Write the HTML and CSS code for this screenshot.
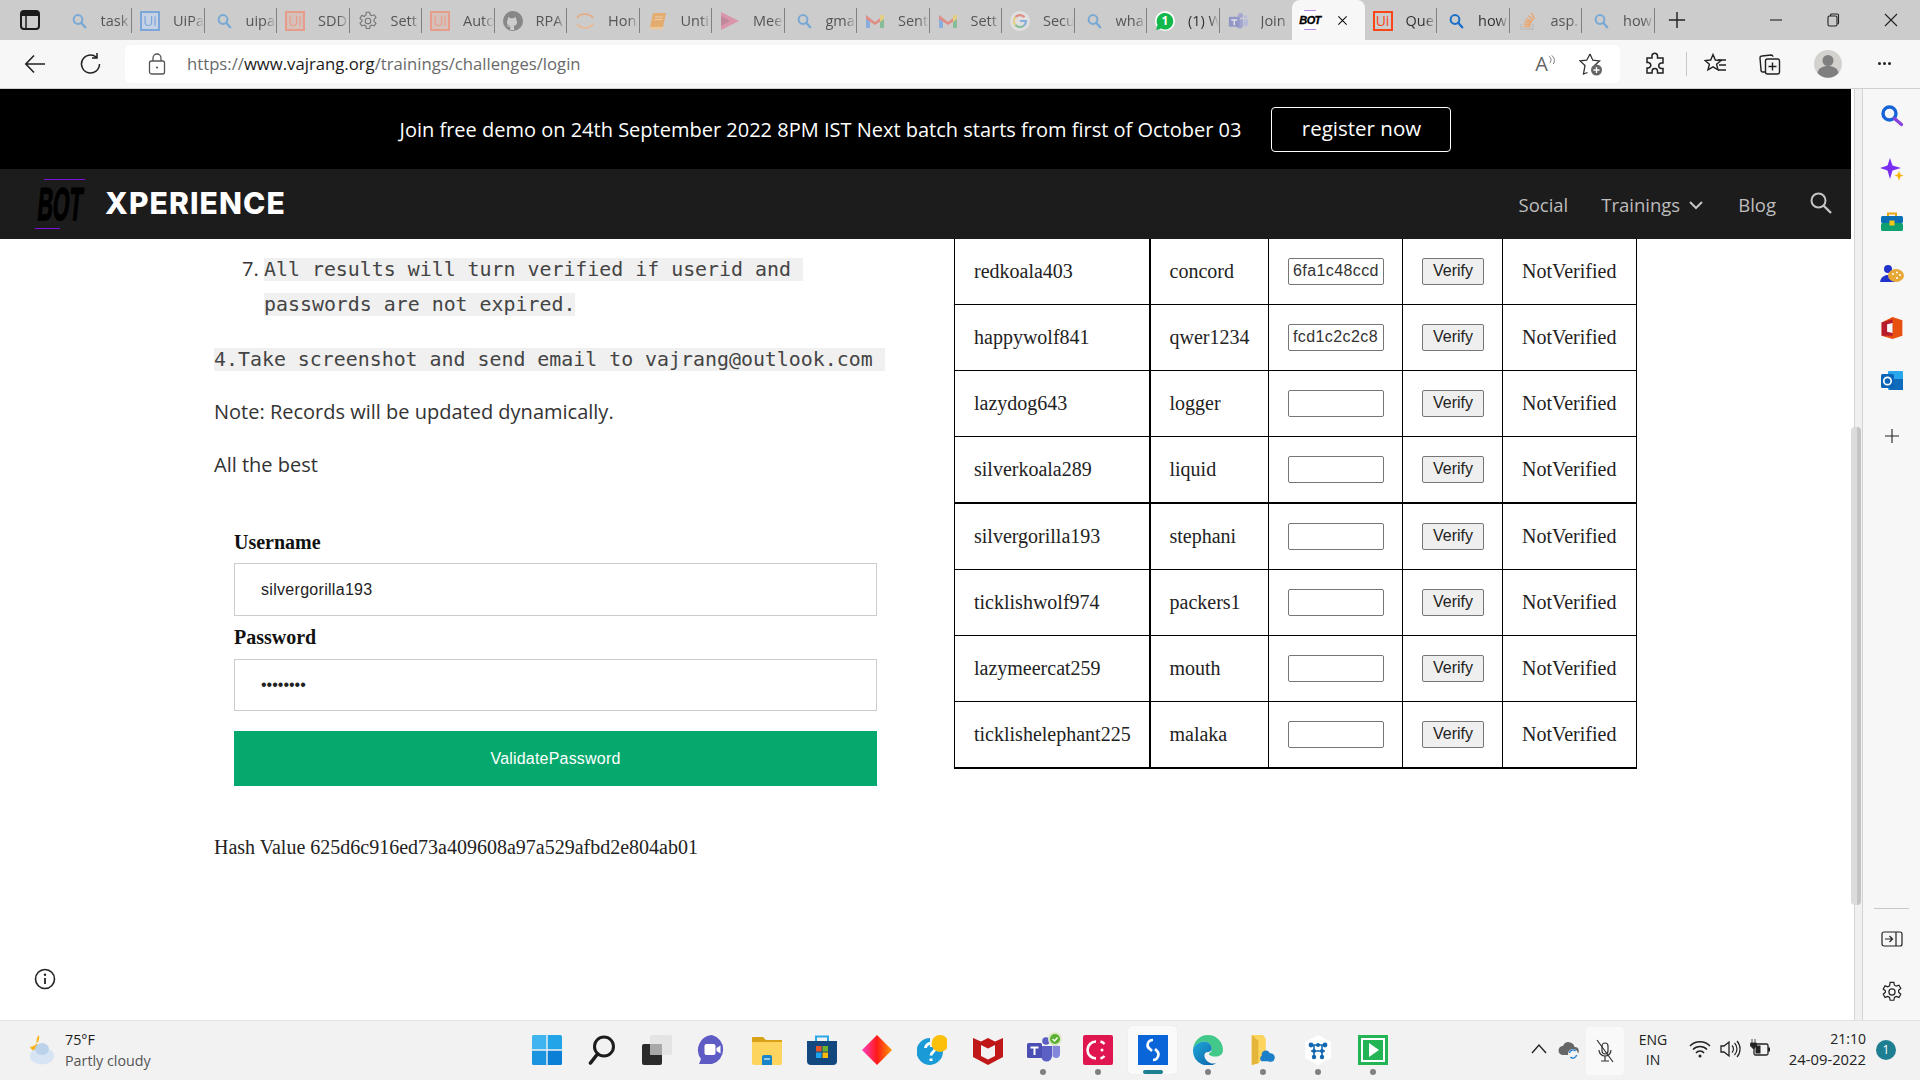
FILE: index.html
```html
<!DOCTYPE html>
<html lang="en">
<head>
<meta charset="utf-8">
<title>Login</title>
<link rel="stylesheet" href="styles.css">
</head>
<body>
<svg class="defs" aria-hidden="true">
<symbol id="i-search" viewBox="0 0 20 20"><circle cx="10" cy="8.500" r="4.400" fill="none" stroke="currentColor" stroke-width="2"/><path d="M13.200 11.800l4 4.500" stroke="currentColor" stroke-width="2.400" stroke-linecap="round"/></symbol>
<symbol id="i-gear" viewBox="0 0 20 20"><path d="M8.300 1.200h3.400l.5 2.600 1.600.9 2.500-.9 1.700 2.900-2 1.700v1.900l2 1.700-1.700 2.900-2.500-.9-1.600.9-.5 2.600H8.300l-.5-2.600-1.600-.9-2.500.9-1.700-2.900 2-1.700V9L2 7.300l1.700-2.900 2.500.9 1.600-.9z" fill="none" stroke="currentColor" stroke-width="1.100"/><circle cx="10" cy="10" r="2.800" fill="none" stroke="currentColor" stroke-width="1.100"/></symbol>
<symbol id="i-github" viewBox="0 0 20 20"><circle cx="10" cy="10" r="10" fill="#7c7c7c"/><path d="M7.200 19v-3c-2.600.5-3-1.200-3.400-2 .6 0 1.400.5 1.800 1.200 1 .9 1.600.3 1.800-.1-2.600-.5-3.500-2-3.500-4 0-1 .4-1.800 1-2.400-.2-.7-.1-1.700.2-2.400 1 0 1.800.6 2.300 1a8 8 0 0 1 3.200 0c.5-.4 1.300-1 2.300-1 .3.7.4 1.700.2 2.400.6.6 1 1.400 1 2.400 0 2-.9 3.500-3.500 4 .3.4.5 1 .5 1.600V19z" fill="#ccc"/></symbol>
<symbol id="i-arc" viewBox="0 0 20 20"><path d="M2 7a9 7 0 0 1 16 0" fill="none" stroke="#eaa878" stroke-width="1.800"/><path d="M2 13a9 7 0 0 0 16 0" fill="none" stroke="#eeb68c" stroke-width="1.800"/></symbol>
<symbol id="i-book" viewBox="0 0 20 20"><path d="M5 2h13l-3 14H2z" fill="#e8a860"/><path d="M2 16h13l-.5 2.500H2.500z" fill="#f2c898"/><path d="M7 6h8M6.500 8.500h8" stroke="#f2d0a8"/></symbol>
<symbol id="i-meet" viewBox="0 0 20 20"><path d="M1 1l18 9-18 9z" fill="#dc8ca4"/><path d="M1 5l9 5-9 5z" fill="#c07c94"/></symbol>
<symbol id="i-gmail" viewBox="0 0 20 20"><path d="M1 4v13h4V8z" fill="#7ea8e0"/><path d="M19 4v13h-4V8z" fill="#7cbc90"/><path d="M1 4l9 7 9-7v4l-9 6-9-6z" fill="#e4837a"/><path d="M15 4l4 0v4l-4 3z" fill="#e8cf78"/></symbol>
<symbol id="i-google" viewBox="0 0 20 20"><circle cx="10" cy="10" r="10" fill="#e4e4e4"/><path d="M14.500 6.300a6 6 0 0 0-9-.3" fill="none" stroke="#e4837a" stroke-width="2.200"/><path d="M5.500 6a6 6 0 0 0 0 8" fill="none" stroke="#e8cf78" stroke-width="2.200"/><path d="M5.500 14a6 6 0 0 0 8.500.5" fill="none" stroke="#7cbc90" stroke-width="2.200"/><path d="M14 14.500a6 6 0 0 0 2-4.500h-6" fill="none" stroke="#7ea8e0" stroke-width="2.200"/></symbol>
<symbol id="i-wa" viewBox="0 0 20 20"><circle cx="10" cy="10" r="10" fill="#fff"/><path d="M1 19l1.500-5A8.300 8.300 0 1 1 6 17.600z" fill="#12b84a"/></symbol>
<symbol id="i-teams" viewBox="0 0 24 20"><circle cx="15" cy="3.500" r="3" fill="#9ca0d0"/><circle cx="21" cy="5" r="2.200" fill="#b8bbdd"/><path d="M10 8h8v7a4 4 0 0 1-8 0z" fill="#9ca0d0"/><path d="M18.500 8H24v6a3 3 0 0 1-5.500 1.500z" fill="#b8bbdd"/><rect x="1" y="5" width="13" height="12" rx="1" fill="#8a8ec6"/><path d="M4 8h7v1.600H8.400V15H6.600V9.600H4z" fill="#e4e4f0"/></symbol>
<symbol id="i-so" viewBox="0 0 20 20"><path d="M3 13v5h12v-5" fill="none" stroke="#bcbbbb" stroke-width="1.600"/><path d="M5.500 15.500h7M5.800 13l7 .6M6.500 10.200l6.800 1.800M8 7.500l6 3.500M10.500 4.500l4.800 5M13.500 2l3 6" stroke="#f0a060" stroke-width="1.600"/></symbol>
<symbol id="i-win" viewBox="0 0 30 30"><path d="M0 1.500A1.500 1.500 0 0 1 1.500 0H14.300v14.300H0z" fill="#3fb4ee"/><path d="M15.700 0h12.800A1.500 1.500 0 0 1 30 1.500V14.300H15.700z" fill="#24a4e8"/><path d="M0 15.700h14.300V30H1.500A1.500 1.500 0 0 1 0 28.500z" fill="#1b94e0"/><path d="M15.700 15.700H30V28.500A1.500 1.500 0 0 1 28.500 30H15.700z" fill="#0b7fd6"/></symbol>
<symbol id="i-mag" viewBox="0 0 30 30"><circle cx="17" cy="11.500" r="9.500" fill="none" stroke="#1c1c1c" stroke-width="3"/><path d="M10.500 19l-7 9" stroke="#1c1c1c" stroke-width="3.600" stroke-linecap="round"/></symbol>
<symbol id="i-task" viewBox="0 0 30 30"><rect x="0" y="9" width="20" height="21" rx="2" fill="#2b2b2b"/><rect x="8" y="0" width="22" height="20" rx="2" fill="#e4e4e4"/><rect x="8" y="9" width="12" height="11" fill="#a8a8a8"/></symbol>
<symbol id="i-chat" viewBox="0 0 30 30"><path d="M15 0a15 15 0 0 1 0 29H2l2-5A15 15 0 0 1 15 0z" fill="#5f5bc4"/><rect x="7.500" y="9" width="11" height="11" rx="2" fill="#fff"/><path d="M19.500 13l4-2.500v8l-4-2.500z" fill="#fff"/></symbol>
<symbol id="i-folder" viewBox="0 0 30 30"><path d="M0 3a1 1 0 0 1 1-1h10l3 3h16v5H0z" fill="#d9a218"/><path d="M0 7h30v21a2 2 0 0 1-2 2H2a2 2 0 0 1-2-2z" fill="#fcd45e"/><path d="M10 22a2 2 0 0 1 2-2h6a2 2 0 0 1 2 2v8H10z" fill="#1a84c8"/><path d="M12 24h6" stroke="#cfe6f5" stroke-width="1.400"/></symbol>
<symbol id="i-store" viewBox="0 0 30 30"><path d="M9 6V1.500h12V6" fill="none" stroke="#2aa8e8" stroke-width="2"/><path d="M0 6h30v20a4 4 0 0 1-4 4H4a4 4 0 0 1-4-4z" fill="#12487e"/><rect x="9" y="11" width="5.500" height="5.500" fill="#e8552a"/><rect x="15.500" y="11" width="5.500" height="5.500" fill="#6eb22a"/><rect x="9" y="17.500" width="5.500" height="5.500" fill="#1ea4ec"/><rect x="15.500" y="17.500" width="5.500" height="5.500" fill="#fcb80a"/></symbol>
<linearGradient id="g-diamond" x1="0" x2="1" y1="0" y2="0"><stop offset="0" stop-color="#ff3fc0"/><stop offset=".5" stop-color="#ff1a1a"/><stop offset="1" stop-color="#ff9a00"/></linearGradient>
<symbol id="i-diamond" viewBox="0 0 30 30"><path d="M15 0l15 15-15 15L0 15z" fill="url(#g-diamond)"/></symbol>
<symbol id="i-help" viewBox="0 0 30 30"><path d="M13 3a13.500 13.500 0 0 0 0 27 13.500 13.500 0 0 0 13-13.500V12H13z" fill="#1a9ad6"/><path d="M8.500 13c.5-6 10-6 10 0 0 3.500-4.500 4-4.500 7.500M14 23.500V26" fill="none" stroke="#fff" stroke-width="3"/><circle cx="23" cy="8.500" r="8.500" fill="#fcc00a"/></symbol>
<symbol id="i-mcafee" viewBox="0 0 30 30"><path d="M0 3l8 3.500 7-3.500 7 3.500L30 3v19l-15 8-15-8z" fill="#c01818"/><path d="M8 10v11l7 3.500 7-3.500V10l-7 3.500z" fill="#f2f2f2"/></symbol>
<symbol id="i-mteams" viewBox="0 0 36 32"><circle cx="19" cy="9" r="3.800" fill="#5c60c4"/><path d="M14 14h11v10a5.500 5.500 0 0 1-11 0z" fill="#5c60c4"/><path d="M25.500 14H33v8a4 4 0 0 1-7.500 2z" fill="#8388dc"/><circle cx="28" cy="11" r="3" fill="#8388dc"/><rect x="0" y="11" width="15" height="15" rx="1.500" fill="#4b4fb4"/><path d="M3.500 14.500h8v2H8.500V23h-2v-6.500h-3z" fill="#fff"/><circle cx="28" cy="7" r="7" fill="#dfe8c8"/><circle cx="28" cy="7" r="5" fill="#5ab030"/><path d="M25.500 7l2 2 3-3.500" fill="none" stroke="#fff" stroke-width="1.400"/></symbol>
<symbol id="i-red" viewBox="0 0 30 30"><rect width="30" height="30" rx="2" fill="#e01650"/><path d="M13 6.500a8.500 8.500 0 0 0 0 17" fill="none" stroke="#fff" stroke-width="2.600"/><path d="M17.500 6.500a8.500 8.500 0 0 1 4 2.500M21.500 21a8.500 8.500 0 0 1-4 2.500" fill="none" stroke="#fff" stroke-width="2.600"/><circle cx="19" cy="15" r="1.500" fill="#fff"/></symbol>
<symbol id="i-sfile" viewBox="0 0 30 30"><rect width="30" height="30" fill="#0a66d8"/><path d="M15 5c-6 0-7 7-3 9l2 2" fill="none" stroke="#fff" stroke-width="2.600"/><path d="M17 14l2 2c3 3 1 9-4 9" fill="none" stroke="#fff" stroke-width="2.600"/></symbol>
<linearGradient id="g-edge" x1="0" x2="1" y1="0" y2="1"><stop offset="0" stop-color="#1ea8d8"/><stop offset="1" stop-color="#0c5fa8"/></linearGradient>
<symbol id="i-edge" viewBox="0 0 32 32"><path d="M16 0a16 16 0 0 1 16 16c0 5-4 7-8 7-3 0-7-1-7-3 0-1 3-1 3-5 0-5-4-8-8-8-6 0-12 5-12 9A16 16 0 0 1 16 0z" fill="#42c98a"/><path d="M0 16c0-4 6-9 12-9 4 0 8 3 8 8 0 2-2 3-4 3-6 0-5 9 3 12 3 1 6 0 7-1A16 16 0 0 1 0 16z" fill="url(#g-edge)"/></symbol>
<symbol id="i-files" viewBox="0 0 30 32"><path d="M3 0h12l3 4v18l-8 8-7 2z" fill="#fcd45e"/><path d="M3 0l7 6v24l-7 2z" fill="#e5b53a"/><circle cx="18" cy="21" r="4.500" fill="#1a7ec8"/><circle cx="23" cy="24" r="4.500" fill="#1a7ec8"/><rect x="12" y="22" width="15" height="6" rx="3" fill="#1a7ec8"/></symbol>
<symbol id="i-hex" viewBox="0 0 30 30"><path d="M15 0l13 7v16l-13 7-13-7V7z" fill="#fff"/><path d="M8 10h14M8 16h14M11 10v12M19 10v12" stroke="#1268b0" stroke-width="1.600"/><g fill="#1268b0"><circle cx="8" cy="10" r="2.400"/><circle cx="22" cy="10" r="2.400"/><circle cx="15" cy="10" r="2"/><circle cx="11" cy="16" r="2"/><circle cx="19" cy="16" r="2"/><circle cx="11" cy="22" r="2.200"/><circle cx="19" cy="22" r="2.200"/></g></symbol>
<symbol id="i-play" viewBox="0 0 30 30"><rect width="30" height="30" fill="#22b455"/><rect x="3" y="3" width="24" height="24" fill="#fff"/><rect x="5" y="5" width="20" height="20" fill="#22b455"/><path d="M11 8l10 7-10 7z" fill="#fff"/></symbol>
</svg>

<div class="tabbar">
  <div class="tab-menu"><svg class="ico24" viewBox="0 0 24 24"><rect x="3" y="3" width="18" height="18" rx="3" fill="none" stroke="#1a1a1a" stroke-width="2"/><path d="M3 8h18V6a3 3 0 0 0-3-3H6a3 3 0 0 0-3 3z" fill="#1a1a1a"/><path d="M8 8v13" stroke="#1a1a1a" stroke-width="1.500"/></svg></div>
  <div class="tab dim"><svg class="tab-ico blue"><use href="#i-search"/></svg><span class="tab-text">task</span></div>
  <div class="tab dim"><span class="ui ui-blue">Ui</span><span class="tab-text">UiPa</span></div>
  <div class="tab dim"><svg class="tab-ico blue"><use href="#i-search"/></svg><span class="tab-text">uipa</span></div>
  <div class="tab dim"><span class="ui ui-salmon">Ui</span><span class="tab-text">SDD</span></div>
  <div class="tab dim"><svg class="tab-ico grey"><use href="#i-gear"/></svg><span class="tab-text">Sett</span></div>
  <div class="tab dim"><span class="ui ui-salmon">Ui</span><span class="tab-text">Auto</span></div>
  <div class="tab dim"><svg class="tab-ico"><use href="#i-github"/></svg><span class="tab-text">RPA</span></div>
  <div class="tab dim"><svg class="tab-ico"><use href="#i-arc"/></svg><span class="tab-text">Hon</span></div>
  <div class="tab dim"><svg class="tab-ico"><use href="#i-book"/></svg><span class="tab-text">Unti</span></div>
  <div class="tab dim"><svg class="tab-ico"><use href="#i-meet"/></svg><span class="tab-text">Mee</span></div>
  <div class="tab dim"><svg class="tab-ico blue"><use href="#i-search"/></svg><span class="tab-text">gma</span></div>
  <div class="tab dim"><svg class="tab-ico"><use href="#i-gmail"/></svg><span class="tab-text">Sent</span></div>
  <div class="tab dim"><svg class="tab-ico"><use href="#i-gmail"/></svg><span class="tab-text">Sett</span></div>
  <div class="tab dim"><svg class="tab-ico"><use href="#i-google"/></svg><span class="tab-text">Secu</span></div>
  <div class="tab dim"><svg class="tab-ico blue"><use href="#i-search"/></svg><span class="tab-text">wha</span></div>
  <div class="tab"><span class="wa"><svg class="tab-ico"><use href="#i-wa"/></svg><span class="wa-num">1</span></span><span class="tab-text">(1) W</span></div>
  <div class="tab dim no-sep"><svg class="tab-ico"><use href="#i-teams"/></svg><span class="tab-text">Join</span></div>
  <div class="tab active"><span class="fav-bot"><span class="fav-line"></span><span class="fav-text">BOT</span><span class="fav-line"></span></span><svg class="tab-close" viewBox="0 0 12 12"><path d="M1.500 1.500l9 9M10.500 1.500l-9 9" stroke="#111" stroke-width="1.200"/></svg></div>
  <div class="tab strong"><span class="ui ui-solid">Ui</span><span class="tab-text">Que</span></div>
  <div class="tab strong"><svg class="tab-ico blue-strong"><use href="#i-search"/></svg><span class="tab-text">how</span></div>
  <div class="tab dim"><svg class="tab-ico"><use href="#i-so"/></svg><span class="tab-text">asp.</span></div>
  <div class="tab dim"><svg class="tab-ico blue"><use href="#i-search"/></svg><span class="tab-text">how</span></div>
  <svg class="new-tab" viewBox="0 0 20 20"><path d="M10 1v18M1 10h18" stroke="#222" stroke-width="1.600"/></svg>
  <div class="win-btns">
    <svg class="win-btn" viewBox="0 0 14 14"><path d="M1 7h12" stroke="#222" stroke-width="1.100"/></svg>
    <svg class="win-btn" viewBox="0 0 14 14"><rect x="2" y="3" width="9" height="10" rx="1.500" fill="none" stroke="#222" stroke-width="1.100"/><path d="M4.500 3V2a1 1 0 0 1 1-1h6a1 1 0 0 1 1 1v8a1 1 0 0 1-1 1" fill="none" stroke="#222" stroke-width="1.100"/></svg>
    <svg class="win-btn" viewBox="0 0 14 14"><path d="M1 1l12 12M13 1L1 13" stroke="#222" stroke-width="1.100"/></svg>
  </div>
</div>

<div class="toolbar">
  <svg class="tb-ico tb-back" viewBox="0 0 24 24"><path d="M22 12H3M11 3.500L2.800 12l8.200 8.500" fill="none" stroke="#222" stroke-width="1.600"/></svg>
  <svg class="tb-ico tb-reload" viewBox="0 0 24 24"><path d="M20.500 12a9 9 0 1 1-3.200-6.900M18 1v5h-5" fill="none" stroke="#222" stroke-width="1.500"/></svg>
  <div class="addr">
    <svg class="lock" viewBox="0 0 20 24"><rect x="2.500" y="9" width="15" height="13" rx="2" fill="none" stroke="#555" stroke-width="1.300"/><path d="M6 9V6a4 4 0 0 1 8 0v3" fill="none" stroke="#555" stroke-width="1.300"/><circle cx="10" cy="15.500" r="1.100" fill="#555"/></svg>
    <span class="url"><span class="url-dim">https://</span>www.vajrang.org<span class="url-dim">/trainings/challenges/login</span></span>
    <span class="read-aloud">A<svg class="ra-waves" viewBox="0 0 8 12"><path d="M1 1c3 2 3 5 1 8M4 0c4 3 4 7 2 10" fill="none" stroke="#666" stroke-width="1"/></svg></span>
    <svg class="fav-add" viewBox="0 0 24 24"><path d="M11 2l2.800 6.200 6.700.7-5 4.500 1 3.600M8.500 20.500L4.500 22l1.500-8.600-5-4.500 6.700-.7L11 2" fill="none" stroke="#333" stroke-width="1.300"/><circle cx="17.500" cy="18" r="5.500" fill="#666"/><path d="M17.500 15v6M14.500 18h6" stroke="#fff" stroke-width="1.300"/></svg>
  </div>
  <svg class="tb-ico tb-ext" viewBox="0 0 24 24"><path d="M9 3.500a2.800 2.800 0 0 1 5.500 0V6H20v5h-2a2.800 2.800 0 0 0 0 5.500h2V21h-5.500v-1.800a2.700 2.700 0 0 0-5.400 0V21H4v-5h1.500a2.800 2.800 0 0 0 0-5.500H4V6h5z" fill="none" stroke="#222" stroke-width="1.500"/></svg>
  <span class="tb-div"></span>
  <svg class="tb-ico tb-favs" viewBox="0 0 24 24"><path d="M9 2.500l2.300 5.500 5.700.5-4.400 3.700 1.400 5.600-5-3-5 3 1.400-5.600L1 8.500 6.700 8z" fill="none" stroke="#222" stroke-width="1.400"/><path d="M14 8h8M15 13h7M14 18h8" stroke="#222" stroke-width="1.500"/></svg>
  <svg class="tb-ico tb-coll" viewBox="0 0 24 24"><path d="M7 20H5a2 2 0 0 1-2-2L2 6a2 2 0 0 1 2-2l9-1a2 2 0 0 1 2 1.800" fill="none" stroke="#222" stroke-width="1.400"/><rect x="7.500" y="7" width="14" height="15" rx="2" fill="none" stroke="#222" stroke-width="1.400"/><path d="M14.500 10.500v8M10.500 14.500h8" stroke="#222" stroke-width="1.400"/></svg>
  <svg class="tb-avatar" viewBox="0 0 28 28"><circle cx="14" cy="14" r="14" fill="#d4d2ce"/><circle cx="14" cy="10.500" r="5.500" fill="#7f7f7f"/><path d="M3.500 23c1-5 5-7 10.500-7s9.500 2 10.500 7a14 14 0 0 1-21 0z" fill="#7f7f7f"/></svg>
  <span class="tb-more"><i></i><i></i><i></i></span>
</div>

<div class="middle">
  <div class="page">
    <div class="banner">
      <span class="banner-text">Join free demo on 24th September 2022 8PM IST Next batch starts from first of October 03</span>
      <a class="register">register now</a>
    </div>
    <nav class="nav">
      <div class="logo">
        <span class="logo-top"></span>
        <span class="logo-text">BOT</span>
        <span class="logo-bottom"></span>
      </div>
      <span class="brand">XPERIENCE</span>
      <div class="nav-links">
        <a class="nav-link">Social</a>
        <a class="nav-link nav-train">Trainings<svg class="chev" viewBox="0 0 14 10"><path d="M1 2l6 6 6-6" fill="none" stroke="#c4c4c4" stroke-width="2"/></svg></a>
        <a class="nav-link">Blog</a>
        <svg class="nav-search" viewBox="0 0 22 22"><circle cx="8.500" cy="8.500" r="7" fill="none" stroke="#c4c4c4" stroke-width="2"/><path d="M13.500 13.500l7.500 7.500" stroke="#c4c4c4" stroke-width="2.400"/></svg>
      </div>
    </nav>
    <main class="main">
      <section class="left">
        <ol class="steps" start="7">
          <li><code class="code">All results will turn verified if userid and&nbsp;</code><br><code class="code">passwords are not expired.</code></li>
        </ol>
        <p class="para"><code class="code">4.Take screenshot and send email to vajrang@outlook.com&nbsp;</code></p>
        <p class="para">Note: Records will be updated dynamically.</p>
        <p class="para">All the best</p>
        <form class="form">
          <label class="lbl">Username</label>
          <input class="field" type="text" value="silvergorilla193">
          <label class="lbl lbl2">Password</label>
          <input class="field field2" type="password" value="abcdefgh">
          <button class="submit" type="button">ValidatePassword</button>
        </form>
        <p class="hash">Hash Value 625d6c916ed73a409608a97a529afbd2e804ab01</p>
      </section>
      <section class="right">
        <table class="tbl">
          <tr><td class="c1">redkoala403</td><td class="c2">concord</td><td class="c3"><input class="hash-in" value="6fa1c48ccd"></td><td class="c4"><button class="verify" type="button">Verify</button></td><td class="c5">NotVerified</td></tr>
          <tr><td class="c1">happywolf841</td><td class="c2">qwer1234</td><td class="c3"><input class="hash-in" value="fcd1c2c2c8"></td><td class="c4"><button class="verify" type="button">Verify</button></td><td class="c5">NotVerified</td></tr>
          <tr><td class="c1">lazydog643</td><td class="c2">logger</td><td class="c3"><input class="hash-in"></td><td class="c4"><button class="verify" type="button">Verify</button></td><td class="c5">NotVerified</td></tr>
          <tr class="thick"><td class="c1">silverkoala289</td><td class="c2">liquid</td><td class="c3"><input class="hash-in"></td><td class="c4"><button class="verify" type="button">Verify</button></td><td class="c5">NotVerified</td></tr>
          <tr><td class="c1">silvergorilla193</td><td class="c2">stephani</td><td class="c3"><input class="hash-in"></td><td class="c4"><button class="verify" type="button">Verify</button></td><td class="c5">NotVerified</td></tr>
          <tr><td class="c1">ticklishwolf974</td><td class="c2">packers1</td><td class="c3"><input class="hash-in"></td><td class="c4"><button class="verify" type="button">Verify</button></td><td class="c5">NotVerified</td></tr>
          <tr><td class="c1">lazymeercat259</td><td class="c2">mouth</td><td class="c3"><input class="hash-in"></td><td class="c4"><button class="verify" type="button">Verify</button></td><td class="c5">NotVerified</td></tr>
          <tr class="thick"><td class="c1">ticklishelephant225</td><td class="c2">malaka</td><td class="c3"><input class="hash-in"></td><td class="c4"><button class="verify" type="button">Verify</button></td><td class="c5">NotVerified</td></tr>
        </table>
      </section>
      <svg class="info" viewBox="0 0 22 22"><circle cx="11" cy="11" r="9.500" fill="none" stroke="#222" stroke-width="1.600"/><path d="M11 10v6" stroke="#222" stroke-width="1.800"/><circle cx="11" cy="6.800" r="1.200" fill="#222"/></svg>
    </main>
  </div>
  <div class="scroll"><div class="scroll-thumb"></div></div>
  <aside class="side">
    <svg class="side-ico s1" viewBox="0 0 24 24"><circle cx="9.500" cy="9.500" r="6.500" fill="none" stroke="#1565d8" stroke-width="3.400"/><path d="M14.500 14.500l7 6" stroke="#8a42d8" stroke-width="3.400" stroke-linecap="round"/></svg>
    <svg class="side-ico s2" viewBox="0 0 24 24"><path d="M10 1l2.500 7.500L21 11l-8.500 2.500L10 22l-2.500-8.500L0 11l7.500-2.500z" fill="#7a2cf0"/><path d="M19 14l1.300 3.200 3.200 1.300-3.200 1.300L19 24l-1.300-4.200-3.200-1.300 3.200-1.300z" fill="#f5b50a"/></svg>
    <svg class="side-ico s3" viewBox="0 0 24 24"><path d="M8 7V3.500h8V7" fill="none" stroke="#e8a818" stroke-width="2"/><rect x="1" y="6" width="22" height="7" rx="1.500" fill="#0c6eb4"/><rect x="1" y="13" width="22" height="8" rx="1.500" fill="#0fa070"/><rect x="9.500" y="10.500" width="5" height="5" fill="#f5c518"/></svg>
    <svg class="side-ico s4" viewBox="0 0 24 24"><circle cx="8" cy="6" r="4" fill="#2233cc"/><path d="M0 19c1-5 4-7 8-7s6 2 7 7z" fill="#2233cc"/><ellipse cx="16" cy="12.500" rx="8" ry="6.500" fill="#e8a838"/><g fill="#fff"><circle cx="13" cy="11" r="1"/><circle cx="17" cy="9.500" r="1"/><circle cx="20" cy="12" r="1"/><circle cx="17" cy="15" r="1"/></g></svg>
    <svg class="side-ico s5" viewBox="2 0 21 22"><path d="M13 1l9 3v14l-9 3-10-3V6z" fill="#e85010"/><path d="M3 6l10-3v15L3 18z" fill="#b81c2c"/><path d="M8 7.500l5-1v9l-5-1z" fill="#f8f8f8"/></svg>
    <svg class="side-ico s6" viewBox="0 0 24 24"><rect x="8" y="2" width="15" height="19" rx="1" fill="#28a8ea"/><path d="M14 10l9 0v11H9z" fill="#0f6cbd"/><rect x="1" y="5" width="13" height="14" rx="1.500" fill="#0a64b8"/><circle cx="7.500" cy="12" r="3.700" fill="none" stroke="#fff" stroke-width="1.700"/></svg>
    <svg class="side-ico s7" viewBox="0 0 16 16"><path d="M8 1v14M1 8h14" stroke="#222" stroke-width="1.100"/></svg>
    <span class="side-gap"></span>
    <span class="side-div"></span>
    <svg class="side-ico s8" viewBox="0 0 22 18"><rect x="1" y="2" width="20" height="14" rx="2" fill="none" stroke="#222" stroke-width="1.200"/><path d="M15 2v14M4 9h7M8.500 6l3 3-3 3" fill="none" stroke="#222" stroke-width="1.200"/></svg>
    <svg class="side-ico s9" viewBox="0 0 20 20"><use href="#i-gear" class="side-gear"/></svg>
  </aside>
</div>

<footer class="taskbar">
  <div class="weather">
    <svg class="wx" viewBox="0 0 30 32"><path d="M14 1a9 9 0 0 0 5 15 9 9 0 0 1-14-3A10 10 0 0 0 14 1z" fill="#f8b414"/><ellipse cx="17" cy="22" rx="12" ry="8.500" fill="#d6e4f4"/><ellipse cx="17" cy="15" rx="7" ry="6" fill="#bcd2ea"/></svg>
    <div class="wx-text"><span class="wx-temp">75°F</span><span class="wx-desc">Partly cloudy</span></div>
  </div>
  <div class="apps">
    <div class="app"><svg class="app-ico"><use href="#i-win"/></svg></div>
    <div class="app"><svg class="app-ico"><use href="#i-mag"/></svg></div>
    <div class="app"><svg class="app-ico"><use href="#i-task"/></svg></div>
    <div class="app"><svg class="app-ico"><use href="#i-chat"/></svg></div>
    <div class="app"><svg class="app-ico"><use href="#i-folder"/></svg></div>
    <div class="app"><svg class="app-ico"><use href="#i-store"/></svg></div>
    <div class="app"><svg class="app-ico"><use href="#i-diamond"/></svg></div>
    <div class="app"><svg class="app-ico"><use href="#i-help"/></svg></div>
    <div class="app"><svg class="app-ico"><use href="#i-mcafee"/></svg></div>
    <div class="app run"><svg class="app-ico wide"><use href="#i-mteams"/></svg></div>
    <div class="app run"><svg class="app-ico"><use href="#i-red"/></svg></div>
    <div class="app run current"><svg class="app-ico"><use href="#i-sfile"/></svg></div>
    <div class="app run"><svg class="app-ico"><use href="#i-edge"/></svg></div>
    <div class="app run"><svg class="app-ico"><use href="#i-files"/></svg></div>
    <div class="app run"><svg class="app-ico"><use href="#i-hex"/></svg></div>
    <div class="app run"><svg class="app-ico"><use href="#i-play"/></svg></div>
  </div>
  <div class="tray">
    <span class="tray-item t-chev"><svg class="tray-ico" viewBox="0 0 18 18"><path d="M2 13l7-8 7 8" fill="none" stroke="#222" stroke-width="1.400"/></svg></span>
    <span class="tray-item t-cloud"><svg class="tray-ico" viewBox="0 0 22 22"><path d="M5 17a4.500 4.500 0 0 1 0-9 6 6 0 0 1 11.500 1A4 4 0 0 1 17 17z" fill="#666"/><circle cx="15" cy="16" r="5" fill="#f2f2f2"/><path d="M11.500 15a3.500 3.500 0 0 1 6-2M18.500 17a3.500 3.500 0 0 1-6 2" fill="none" stroke="#1a78d0" stroke-width="1.300"/></svg></span>
    <span class="tray-item t-mic"><svg class="tray-ico" viewBox="0 0 22 26"><rect x="8" y="5" width="6" height="11" rx="3" fill="none" stroke="#333" stroke-width="1.200"/><path d="M5 12a6 6 0 0 0 12 0M11 18v5M7 23h8M3 2l16 22" fill="none" stroke="#333" stroke-width="1.200"/></svg></span>
    <span class="tray-item t-lang"><span>ENG</span><span>IN</span></span>
    <span class="tray-item t-sys"><svg class="tray-ico" viewBox="0 0 22 20"><path d="M1 7a14 14 0 0 1 20 0M4 10.500a9.500 9.500 0 0 1 14 0M7 14a5 5 0 0 1 8 0" fill="none" stroke="#222" stroke-width="1.500"/><circle cx="11" cy="17" r="1.500" fill="#222"/></svg></span>
    <span class="tray-item t-sys"><svg class="tray-ico" viewBox="0 0 22 20"><path d="M2 7h3l5-4v14l-5-4H2z" fill="none" stroke="#222" stroke-width="1.300"/><path d="M13 6.500a5 5 0 0 1 0 7M15.500 4a8.500 8.500 0 0 1 0 12M18 2a12 12 0 0 1 0 16" fill="none" stroke="#222" stroke-width="1.200"/></svg></span>
    <span class="tray-item t-sys"><svg class="tray-ico" viewBox="0 0 22 20"><rect x="5" y="5" width="14" height="11" rx="1.500" fill="none" stroke="#222" stroke-width="1.300"/><rect x="6.500" y="6.500" width="5" height="8" fill="#222"/><path d="M20 8.500v4" stroke="#222" stroke-width="2"/><path d="M3 0v4M6 0v4M1.500 4h6v3l-3 3-3-3z" fill="#222" stroke="#222" stroke-width=".8"/></svg></span>
    <span class="tray-item t-clock"><span class="clock-time">21:10</span><span class="clock-date">24-09-2022</span></span>
    <span class="notif">1</span>
  </div>
</footer>
</body>
</html>
```
FILE: styles.css
```css
* { box-sizing: border-box; }
html, body { margin: 0; padding: 0; }
body { width: 1920px; height: 1080px; overflow: hidden; display: flex; flex-direction: column; background: #fff; font-family: "Open Sans", sans-serif; }
.defs { width: 0; height: 0; position: absolute; }

/* tab strip */
.tabbar { height: 40px; background: #cccccc; display: flex; align-items: center; flex: none; }
.tab-menu { width: 59.500px; display: flex; justify-content: center; }
.ico24 { width: 24px; height: 24px; }
.tab { width: 72.500px; height: 25px; display: flex; align-items: center; padding-left: 8px; gap: 13px; border-right: 1.500px solid #808080; flex: none; margin-top: 1px; }
.tab.no-sep { border-right: 0; }
.tab-ico { width: 20px; height: 20px; flex: none; }
.tab-text { font-size: 14.500px; line-height: 20px; width: 31px; white-space: nowrap; overflow: hidden; color: #333; -webkit-mask-image: linear-gradient(to right, #000 65%, transparent); mask-image: linear-gradient(to right, #000 65%, transparent); }
.dim .tab-text { color: #555; }
.dim .tab-ico, .dim .ui { opacity: .85; }
.blue { color: #6aa2d6; }
.blue-strong { color: #1a6fc8; }
.grey { color: #666; }
.ui { width: 20px; height: 20px; flex: none; display: flex; align-items: center; justify-content: center; font: 14px/1 "Open Sans", sans-serif; border-width: 2px; border-style: solid; }
.ui-blue { color: #6f9fdc; border-color: #6f9fdc; background: #c4d4ea; }
.ui-salmon { color: #ec9480; border-color: #ec9480; background: #d8c0b8; }
.ui-solid { color: #fa4616; border-color: #fa4616; background: #ccc; }
.wa { position: relative; width: 20px; height: 20px; flex: none; }
.wa-num { position: absolute; inset: 0; display: flex; align-items: center; justify-content: center; color: #fff; font-size: 12px; font-weight: 700; }
.tab.active { height: 40px; margin-top: 0; background: #f7f7f7; border-right: 0; border-radius: 8px 8px 0 0; padding-left: 8px; gap: 0; }
.fav-bot { width: 20px; height: 20px; background: #fff; display: flex; flex-direction: column; align-items: center; justify-content: space-between; }
.fav-line { width: 12px; height: 1px; background: #b78ae8; flex: none; }
.fav-text { font: italic 700 11px/14px "Liberation Sans", sans-serif; color: #000; letter-spacing: -.6px; -webkit-text-stroke: .3px #000; }
.tab-close { width: 11px; height: 11px; margin-left: 17px; }
.new-tab { width: 18px; height: 18px; margin-left: 13px; flex: none; }
.win-btns { display: flex; align-items: center; margin-left: auto; }
.win-btn { width: 14px; height: 14px; }
.win-btn:nth-child(1) { margin-right: 43px; }
.win-btn:nth-child(2) { margin-right: 44px; }
.win-btn:nth-child(3) { margin-right: 22px; }

/* address row */
.toolbar { height: 49px; background: #f7f7f7; display: flex; align-items: center; flex: none; padding-bottom: 1px; border-bottom: 1px solid #cfcfcf; }
.tb-ico { width: 24px; height: 24px; flex: none; }
.tb-back { margin-left: 23px; }
.tb-reload { margin-left: 32px; }
.addr { width: 1495px; height: 38px; margin-left: 22px; background: #fff; border-radius: 6px; display: flex; align-items: center; padding-left: 22px; flex: none; }
.lock { width: 20px; height: 24px; flex: none; }
.url { margin-left: 20px; font-size: 16.700px; color: #1a1a1a; white-space: nowrap; }
.url-dim { color: #6a6a6a; }
.read-aloud { margin-left: auto; font-size: 20px; line-height: 24px; color: #666; display: flex; align-items: flex-start; }
.ra-waves { width: 7px; height: 11px; margin-top: 3px; }
.fav-add { width: 24px; height: 24px; margin-left: 24px; margin-right: 17px; }
.tb-ext { margin-left: 23px; }
.tb-div { width: 1px; height: 24px; background: #c8c8c8; margin-left: 19px; flex: none; }
.tb-favs { margin-left: 17px; }
.tb-coll { margin-left: 30px; }
.tb-avatar { width: 28px; height: 28px; margin-left: 32px; flex: none; }
.tb-more { display: flex; gap: 2px; margin-left: 36px; }
.tb-more i { width: 3px; height: 3px; background: #222; border-radius: 50%; }

/* middle area */
.middle { flex: 1; display: flex; min-height: 0; }
.page { width: 1851px; flex: none; display: flex; flex-direction: column; }
.banner { height: 80px; background: #000; display: flex; align-items: center; justify-content: center; gap: 30px; flex: none; }
.banner-text { color: #fff; font-size: 20px; white-space: nowrap; }
.register { width: 180px; height: 45px; border: 1px solid #fff; border-radius: 4px; color: #fff; font-size: 20.500px; display: flex; align-items: center; justify-content: center; padding-bottom: 2px; }
.nav { height: 70px; background: #1c1c1c; display: flex; align-items: center; flex: none; padding-left: 35px; }
.logo { width: 50px; height: 70px; position: relative; flex: none; }
.logo-top { position: absolute; left: 9px; top: 10px; width: 41px; height: 1px; background: #7b10d8; }
.logo-bottom { position: absolute; left: 0; top: 59px; width: 25px; height: 1px; background: #7b10d8; }
.logo-text { position: absolute; left: -17px; top: 9px; width: 74px; text-align: center; font: 700 46px/52px "Liberation Sans", sans-serif; color: #000; -webkit-text-stroke: 1.500px #000; transform: scaleX(.46) skewX(-12deg); }
.brand { margin-left: 20px; color: #fff; font: 800 30px/36px "Inter", sans-serif; letter-spacing: 1.100px; margin-top: -2px; }
.nav-links { margin-left: auto; display: flex; align-items: center; color: #bdbdbd; font-size: 18.500px; padding-right: 19px; }
.nav-link { white-space: nowrap; display: flex; align-items: center; margin-right: 33px; }
.nav-train { margin-right: 34px; }
.chev { width: 16px; height: 10px; margin-left: 8px; margin-top: 2px; }
.nav-search { width: 22px; height: 22px; margin-left: 1px; margin-top: -3px; }
.main { flex: 1; position: relative; display: flex; min-height: 0; background: #fff; overflow: hidden; }
.left { width: 954px; flex: none; padding: 12px 0 0 214px; color: #333; font-size: 20px; }
.steps { margin: 0; padding: 0 0 0 50px; line-height: 35px; }
.code { font-family: "DejaVu Sans Mono", monospace; font-size: 19.900px; line-height: 1; color: #444; background: #f0f0f0; white-space: pre; }
.para { margin: 0 0 21px; line-height: 32px; }
.steps + .para { margin-top: 22px; }
.form { margin: 49px 0 0 20px; width: 643px; display: flex; flex-direction: column; color: #111; font: 700 20px/24px "Liberation Serif", serif; }
.lbl { display: block; height: 24px; }
.lbl2 { margin-top: 9px; }
.field { height: 53px; margin-top: 9px; border: 1.500px solid #ccc; padding: 0 26px; font: 16px "Liberation Sans", sans-serif; letter-spacing: .3px; color: #222; outline: 0; background: #fff; }
.field2 { letter-spacing: 0; height: 52px; margin-top: 10px; }
.submit { height: 55px; margin-top: 20px; border: 0; background: #06a96d; color: #fff; font: 16px "Liberation Sans", sans-serif; letter-spacing: .2px; }
.hash { margin: 49px 0 0; color: #222; font: 20px/24px "Liberation Serif", serif; }
.right { flex: none; }
.tbl { border-collapse: collapse; table-layout: fixed; width: 682px; font: 20px "Liberation Serif", serif; color: #222; }
.tbl td { height: 66px; border: 1px solid #000; padding: 0 0 0 19px; white-space: nowrap; }
.tbl tr:first-child td { border-top: 0; height: 65px; }
.c1 { width: 195px; border-right: 2px solid #000 !important; }
.c2 { width: 119px; }
.c3 { width: 134px; }
.c4 { width: 100px; }
.c5 { width: 134px; }
.tbl .thick td { border-bottom: 2px solid #000; height: 67px; }
.hash-in { width: 96px; height: 27px; border: 1px solid #767676; border-radius: 2px; padding: 1px 4px; font: 16px "Liberation Sans", sans-serif; letter-spacing: .4px; color: #333; background: #fff; display: block; }
.verify { width: 62px; height: 27px; border: 1px solid #767676; border-radius: 2px; background: #efefef; color: #222; font: 16px "Liberation Sans", sans-serif; padding: 0; display: block; }
.info { position: absolute; left: 34px; top: 729px; width: 22px; height: 22px; }

/* scrollbar + edge sidebar */
.scroll { width: 12px; flex: none; position: relative; background: linear-gradient(to right, #fff 3px, #d4d4d4 3px, #d4d4d4 4px, #f0f0f0 4px, #f0f0f0 11px, #d4d4d4 11px); }
.scroll-thumb { position: absolute; left: 0; top: 338px; width: 10px; height: 478px; border-radius: 4px; background: linear-gradient(to right, #dcdcdc 0 6px, #c4c4c4 6px 10px); }
.side { width: 57px; flex: none; background: #f7f7f7; display: flex; flex-direction: column; align-items: center; padding-top: 15px; }
.side-ico { width: 24px; height: 24px; flex: none; margin-bottom: 29px; }
.s7 { width: 16px; height: 16px; margin-top: 6px; }
.side-gap { flex: 1; }
.side-div { width: 35px; height: 1px; background: #c8c8c8; margin-bottom: 21px; flex: none; }
.s8 { width: 22px; height: 18px; margin-bottom: 33px; }
.s9 { width: 22px; height: 22px; color: #222; margin-bottom: 17px; }

/* taskbar */
.taskbar { height: 60px; flex: none; background: #f2f2f2; border-top: 1px solid #e2e2e2; display: flex; align-items: center; position: relative; }
.weather { width: 519.500px; flex: none; display: flex; align-items: center; padding-left: 25px; margin-top: -2px; }
.wx { width: 30px; height: 32px; flex: none; }
.wx-text { margin-left: 10px; display: flex; flex-direction: column; font-size: 14.300px; line-height: 21px; }
.wx-temp { color: #1a1a1a; }
.wx-desc { color: #555; }
.apps { display: flex; flex: none; margin-top: -2px; }
.app { width: 55.070px; height: 48px; display: flex; align-items: center; justify-content: center; position: relative; flex: none; }
.app-ico { width: 30px; height: 30px; }
.app-ico.wide { width: 36px; height: 32px; margin-left: 4px; margin-top: -4px; }
.app.run::after { content: ""; position: absolute; left: 50%; bottom: -1px; width: 6px; height: 6px; margin-left: -3px; background: #808080; border-radius: 50%; }
.app.current { background: #fafafa; border-radius: 4px; width: 49px; margin: 0 3px; box-shadow: 0 0 1px #d0d0d0; }
.app.current::after { width: 20px; height: 4px; margin-left: -10px; background: #1f7f92; border-radius: 2px; bottom: 0; }
.tray { margin-left: auto; display: flex; align-items: center; padding-right: 24px; }
.tray-item { display: flex; align-items: center; justify-content: center; flex: none; }
.tray-ico { width: 22px; height: 22px; }
.t-chev { width: 26px; margin-top: -3px; }
.t-chev .tray-ico { width: 18px; height: 18px; }
.t-cloud { width: 34px; margin-top: -3px; }
.t-mic { width: 38px; height: 48px; background: #f9f9f9; border-radius: 4px; }
.t-mic .tray-ico { height: 30px; }
.t-lang { width: 58px; flex-direction: column; font-size: 14px; line-height: 20px; color: #222; margin-top: -2px; }
.t-sys { width: 30px; margin-top: -3px; }
.t-sys:nth-child(5) { margin-left: 3px; }
.t-clock { width: 91px; flex-direction: column; align-items: flex-end; line-height: 21px; color: #222; margin-top: -3px; }
.clock-time { font-size: 14px; }
.clock-date { font-size: 14.800px; }
.notif { width: 20px; height: 20px; margin-left: 10px; border-radius: 50%; background: #1f7f92; color: #fff; font-size: 12px; display: flex; align-items: center; justify-content: center; margin-top: -2px; }
```
